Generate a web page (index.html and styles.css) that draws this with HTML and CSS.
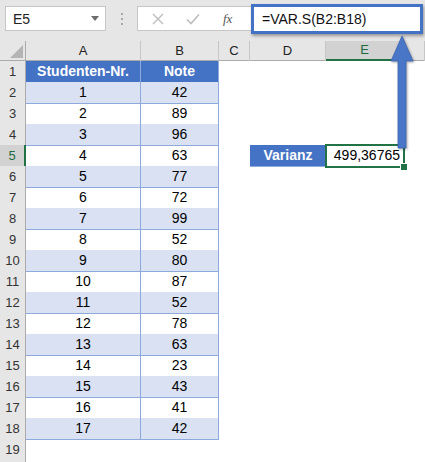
FILE: index.html
```html
<!DOCTYPE html>
<html lang="de">
<head>
<meta charset="utf-8">
<link rel="stylesheet" href="styles.css">
</head>
<body>
<div class="app">
  <div class="toolbar">
    <div class="namebox"><span class="nb-text">E5</span><span class="caret"></span></div>
    <div class="dots"><span></span><span></span><span></span></div>
    <div class="fxbox">
      <svg class="ico" width="12" height="12" viewBox="0 0 12 12"><path d="M1 1 L11 11 M11 1 L1 11" stroke="#bdbdbd" stroke-width="1.4" fill="none"/></svg>
      <svg class="ico" width="14" height="12" viewBox="0 0 14 12"><path d="M1 6.5 L5 10.5 L13 1.5" stroke="#bdbdbd" stroke-width="1.6" fill="none"/></svg>
      <span class="fx">fx</span>
    </div>
    <div class="formula">=VAR.S(B2:B18)</div>
  </div>

  <div class="sheet">
    <div class="row colhead">
      <div class="corner"><span class="tri"></span></div>
      <div class="ch">A</div><div class="ch">B</div><div class="ch">C</div><div class="ch">D</div><div class="ch sel">E</div><div class="ch"></div>
    </div>
    <div class="row"><div class="rh">1</div><div class="c t hd">Studenten-Nr.</div><div class="c t hd">Note</div><div class="c"></div><div class="c"></div><div class="c"></div><div class="c"></div></div>
    <div class="row"><div class="rh">2</div><div class="c t alt">1</div><div class="c t alt">42</div><div class="c"></div><div class="c"></div><div class="c"></div><div class="c"></div></div>
    <div class="row"><div class="rh">3</div><div class="c t">2</div><div class="c t">89</div><div class="c"></div><div class="c"></div><div class="c"></div><div class="c"></div></div>
    <div class="row"><div class="rh">4</div><div class="c t alt">3</div><div class="c t alt">96</div><div class="c"></div><div class="c"></div><div class="c"></div><div class="c"></div></div>
    <div class="row"><div class="rh rsel">5</div><div class="c t">4</div><div class="c t">63</div><div class="c"></div><div class="c label">Varianz</div><div class="c active">499,36765</div><div class="c"></div></div>
    <div class="row"><div class="rh">6</div><div class="c t alt">5</div><div class="c t alt">77</div><div class="c"></div><div class="c"></div><div class="c"></div><div class="c"></div></div>
    <div class="row"><div class="rh">7</div><div class="c t">6</div><div class="c t">72</div><div class="c"></div><div class="c"></div><div class="c"></div><div class="c"></div></div>
    <div class="row"><div class="rh">8</div><div class="c t alt">7</div><div class="c t alt">99</div><div class="c"></div><div class="c"></div><div class="c"></div><div class="c"></div></div>
    <div class="row"><div class="rh">9</div><div class="c t">8</div><div class="c t">52</div><div class="c"></div><div class="c"></div><div class="c"></div><div class="c"></div></div>
    <div class="row"><div class="rh">10</div><div class="c t alt">9</div><div class="c t alt">80</div><div class="c"></div><div class="c"></div><div class="c"></div><div class="c"></div></div>
    <div class="row"><div class="rh">11</div><div class="c t">10</div><div class="c t">87</div><div class="c"></div><div class="c"></div><div class="c"></div><div class="c"></div></div>
    <div class="row"><div class="rh">12</div><div class="c t alt">11</div><div class="c t alt">52</div><div class="c"></div><div class="c"></div><div class="c"></div><div class="c"></div></div>
    <div class="row"><div class="rh">13</div><div class="c t">12</div><div class="c t">78</div><div class="c"></div><div class="c"></div><div class="c"></div><div class="c"></div></div>
    <div class="row"><div class="rh">14</div><div class="c t alt">13</div><div class="c t alt">63</div><div class="c"></div><div class="c"></div><div class="c"></div><div class="c"></div></div>
    <div class="row"><div class="rh">15</div><div class="c t">14</div><div class="c t">23</div><div class="c"></div><div class="c"></div><div class="c"></div><div class="c"></div></div>
    <div class="row"><div class="rh">16</div><div class="c t alt">15</div><div class="c t alt">43</div><div class="c"></div><div class="c"></div><div class="c"></div><div class="c"></div></div>
    <div class="row"><div class="rh">17</div><div class="c t">16</div><div class="c t">41</div><div class="c"></div><div class="c"></div><div class="c"></div><div class="c"></div></div>
    <div class="row"><div class="rh">18</div><div class="c t alt">17</div><div class="c t alt">42</div><div class="c"></div><div class="c"></div><div class="c"></div><div class="c"></div></div>
    <div class="row"><div class="rh">19</div><div class="c"></div><div class="c"></div><div class="c"></div><div class="c"></div><div class="c"></div><div class="c"></div></div>
    <div class="row"><div class="rh"></div><div class="c"></div><div class="c"></div><div class="c"></div><div class="c"></div><div class="c"></div><div class="c"></div></div>
  </div>

  <svg class="arrow" width="30" height="124" viewBox="0 0 30 124">
    <path d="M14 6 L25 31 L18 31 L18 118 L10 118 L10 31 L3 31 Z" fill="#4a76c7" stroke="#3d66b3" stroke-width="0.8"/>
  </svg>
</div>
</body>
</html>
```

FILE: styles.css
```css
* { box-sizing: border-box; }
html, body { margin: 0; padding: 0; }
body {
  width: 425px;
  height: 462px;
  overflow: hidden;
  background: #ffffff;
  font-family: "Liberation Sans", Arial, sans-serif;
}
.app { position: relative; width: 425px; height: 462px; }

.toolbar {
  display: flex;
  align-items: flex-start;
  height: 41px;
  background: #e6e6e6;
}
.namebox {
  margin: 6px 0 0 5px;
  width: 101px;
  height: 25px;
  background: #fff;
  border: 1px solid #c6c6c6;
  display: flex;
  align-items: center;
  justify-content: space-between;
  padding: 0 6px 0 7px;
}
.nb-text { font-size: 14px; color: #222; }
.caret {
  width: 0; height: 0;
  border-left: 4px solid transparent;
  border-right: 4px solid transparent;
  border-top: 5px solid #6d6d6d;
}
.dots {
  width: 31px;
  height: 41px;
  display: flex;
  flex-direction: column;
  align-items: center;
  justify-content: center;
  gap: 3px;
  padding-bottom: 3px;
}
.dots span { width: 2px; height: 2px; background: #a8a8a8; }
.fxbox {
  margin-top: 6px;
  width: 114px;
  height: 25px;
  background: #fff;
  border: 1px solid #c6c6c6;
  border-right: none;
  display: flex;
  align-items: center;
  padding-left: 14px;
  gap: 22px;
}
.fx {
  font-family: "Liberation Serif", "Times New Roman", serif;
  font-style: italic;
  font-size: 13px;
  color: #555;
  margin-left: 1px;
}
.formula {
  margin-top: 4px;
  width: 172px;
  height: 30px;
  background: #fff;
  border: 3px solid #4472c4;
  box-shadow: 1px 2px 3px rgba(0,0,0,0.35);
  font-size: 14px;
  color: #111;
  padding: 4px 0 0 8px;
  position: relative;
  z-index: 1;
}

.sheet { width: 425px; }
.row {
  display: grid;
  grid-template-columns: 26px 115px 78px 31px 76px 78px 21px;
  height: 21px;
}
.colhead {
  height: 20px;
  background: #e6e6e6;
  border-bottom: 1px solid #ababab;
}
.corner {
  border-right: 1px solid #ababab;
  position: relative;
}
.tri {
  position: absolute;
  right: 2px;
  bottom: 3px;
  width: 0; height: 0;
  border-left: 13px solid transparent;
  border-bottom: 13px solid #b4b4b4;
}
.ch {
  border-right: 1px solid #c6c6c6;
  font-size: 13px;
  color: #222;
  text-align: center;
  line-height: 19px;
}
.ch.sel {
  background: #d2d2d2;
  color: #1e6b40;
  border-bottom: 2px solid #217346;
  line-height: 18px;
}
.rh {
  background: #e6e6e6;
  border-right: 1px solid #ababab;
  border-bottom: 1px solid #d4d4d4;
  font-size: 13px;
  color: #333;
  text-align: center;
  line-height: 21px;
}
.rh.rsel {
  background: #d2d2d2;
  color: #1e6b40;
  border-right: 2px solid #217346;
}
.c {
  font-size: 14px;
  line-height: 21px;
  color: #000;
  text-align: center;
  white-space: nowrap;
}
.t {
  border-right: 1px solid #8ea9db;
  border-bottom: 1px solid #8ea9db;
  line-height: 20px;
}
.alt { background: #d9e1f2; }
.hd {
  background: #4472c4;
  color: #fff;
  font-weight: bold;
}
.label {
  background: #4472c4;
  color: #fff;
  font-weight: bold;
  border-bottom: 1px solid #8ea9db;
  line-height: 20px;
}
.active {
  position: relative;
  text-align: right;
  padding-right: 4px;
  box-shadow: 0 0 0 1px #217346, inset 0 0 0 1px #217346;
}
.active::after {
  content: "";
  position: absolute;
  right: -4px;
  bottom: -4px;
  width: 6px;
  height: 6px;
  background: #217346;
  border: 1px solid #fff;
}

.arrow {
  position: absolute;
  left: 388px;
  top: 30px;
  z-index: 2;
  filter: drop-shadow(1px 1px 1px rgba(0,0,0,0.35));
}
```
